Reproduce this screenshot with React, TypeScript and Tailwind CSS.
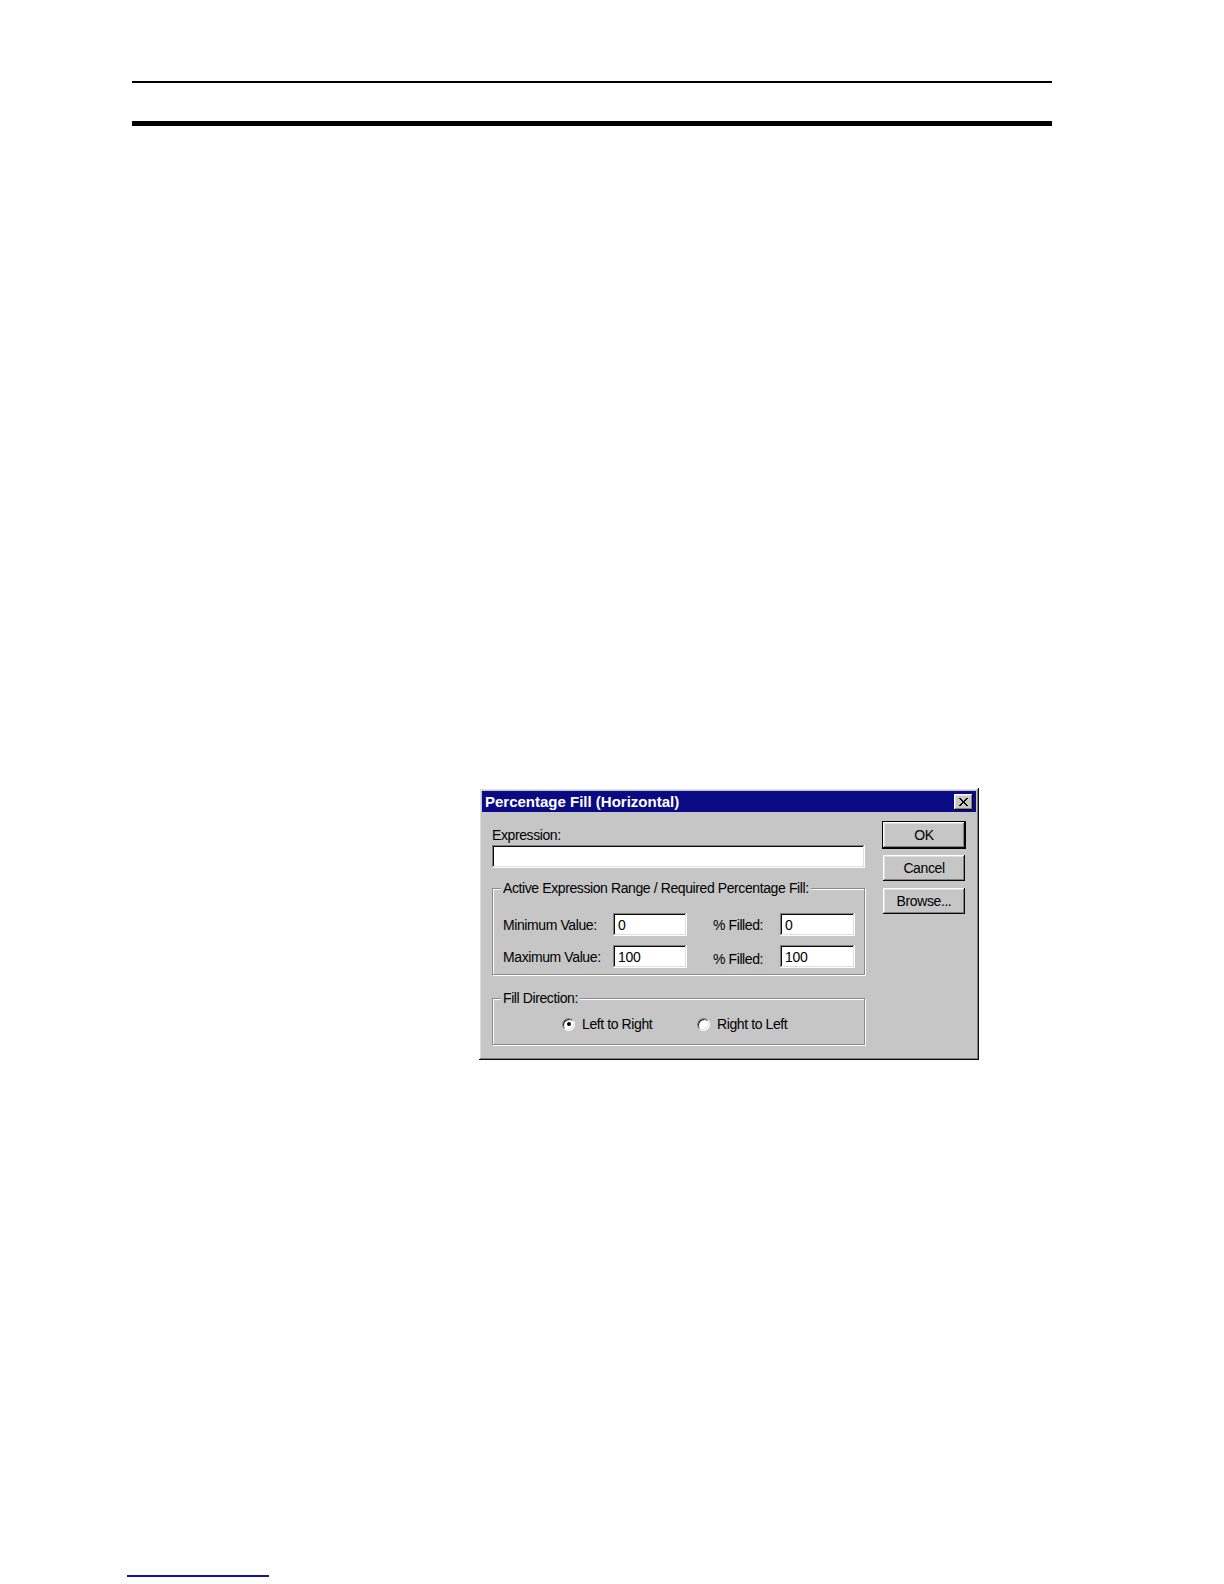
import React from "react";

const font = "font-['Liberation_Sans',Arial,sans-serif]";
const raised =
  "bg-[#c6c6c6] shadow-[inset_-1px_-1px_#0a0a0a,inset_1px_1px_#ffffff,inset_-2px_-2px_#808080,inset_2px_2px_#dfdfdf]";
const sunken =
  "bg-white shadow-[inset_-1px_-1px_#ffffff,inset_1px_1px_#808080,inset_-2px_-2px_#dfdfdf,inset_2px_2px_#0a0a0a]";
const etched =
  "border border-[#8a8a8a] shadow-[1px_1px_0_#ffffff,inset_1px_1px_0_#ffffff]";
const label = "text-[14px] leading-[16px] tracking-[-0.4px]";

function Field({ value, w }: { value?: string; w: string }) {
  return (
    <div className={`${sunken} ${w} flex h-[23px] items-center pl-[5px] text-[14px] leading-none tracking-[-0.3px] text-black`}>
      {value}
    </div>
  );
}

function Button({ label: text, isDefault }: { label: string; isDefault?: boolean }) {
  return (
    <button
      type="button"
      className={`${raised} flex h-[26px] w-[82px] items-center justify-center text-[14px] tracking-[-0.4px] text-black ${
        isDefault ? "outline outline-1 outline-black" : ""
      }`}
    >
      {text}
    </button>
  );
}

function Radio({ checked, text, w }: { checked?: boolean; text: string; w: string }) {
  return (
    <div className={`flex items-center gap-[7px] ${w}`}>
      <span className="grid h-[13px] w-[13px] place-items-center rounded-full border border-[#808080] border-b-white border-r-white bg-white shadow-[inset_1px_1px_0_#202020,inset_-1px_-1px_0_#dfdfdf]">
        {checked && <span className="h-[4px] w-[4px] rounded-full bg-black" />}
      </span>
      <span className={label}>{text}</span>
    </div>
  );
}

function Group({
  legend,
  className,
  children,
}: {
  legend: string;
  className?: string;
  children: React.ReactNode;
}) {
  return (
    <fieldset className={`${etched} mx-0 ${className ?? ""}`}>
      <legend className={`ml-[8px] bg-[#c6c6c6] px-[2px] ${label}`}>{legend}</legend>
      {children}
    </fieldset>
  );
}

function Dialog() {
  return (
    <div
      className={`ml-[479px] mt-[662px] flex h-[272px] w-[500px] flex-col p-[3px] ${raised} ${font} text-black`}
    >
      <div className="flex h-[21px] items-center justify-between bg-[#0a0a84] pl-[3px] pr-[3px]">
        <span className="text-[15px] font-bold leading-none text-white">
          Percentage Fill (Horizontal)
        </span>
        <span className={`${raised} grid h-[16px] w-[19px] place-items-center`}>
          <svg width="9" height="8" viewBox="0 0 9 8" shapeRendering="crispEdges">
            <path
              d="M0 0h2v1h1v1h1v1h1V2h1V1h1V0h2v1H8v1H7v1H6v2h1v1h1v1h1v1H7V7H6V6H5V5H4v1H3v1H2v1H0V7h1V6h1V5h1V3H2V2H1V1H0z"
              fill="#000"
            />
          </svg>
        </span>
      </div>
      <div className="flex flex-1 gap-[18px] pl-[10px] pr-[10px] pt-[10px]">
        <div className="mt-[5px] flex w-[373px] flex-col">
          <div className={label}>Expression:</div>
          <div className="mt-[2px]">
            <Field w="w-[373px]" />
          </div>
          <Group legend="Active Expression Range / Required Percentage Fill:" className="mt-[12px] pb-[6px] pt-[17px]">
            <div className="flex flex-col gap-[9px]">
              <div className="flex items-center">
                <span className={`w-[120px] pl-[10px] ${label}`}>Minimum Value:</span>
                <Field value="0" w="w-[74px]" />
                <span className={`ml-[26px] w-[67px] ${label}`}>% Filled:</span>
                <Field value="0" w="w-[75px]" />
              </div>
              <div className="flex items-center">
                <span className={`w-[120px] pl-[10px] ${label}`}>Maximum Value:</span>
                <Field value="100" w="w-[74px]" />
                <span className={`ml-[26px] mt-[4px] w-[67px] ${label}`}>% Filled:</span>
                <Field value="100" w="w-[75px]" />
              </div>
            </div>
          </Group>
          <Group legend="Fill Direction:" className="mt-[15px] pb-[12px] pt-[10px]">
            <div className="flex items-center pl-[69px]">
              <Radio checked text="Left to Right" w="w-[135px]" />
              <Radio text="Right to Left" w="w-[120px]" />
            </div>
          </Group>
        </div>
        <div className="flex flex-col gap-[7px]">
          <Button label="OK" isDefault />
          <Button label="Cancel" />
          <Button label="Browse..." />
        </div>
      </div>
    </div>
  );
}

export default function App() {
  return (
    <div className="h-[1584px] w-[1224px] overflow-hidden bg-white pt-[81px]">
      <div className="ml-[132px] h-[2px] w-[920px] bg-black" />
      <div className="ml-[132px] mt-[38px] h-[5px] w-[920px] bg-black" />
      <Dialog />
      <div className="ml-[127px] mt-[515px] h-[2px] w-[142px] bg-[#1414a0]" />
    </div>
  );
}
